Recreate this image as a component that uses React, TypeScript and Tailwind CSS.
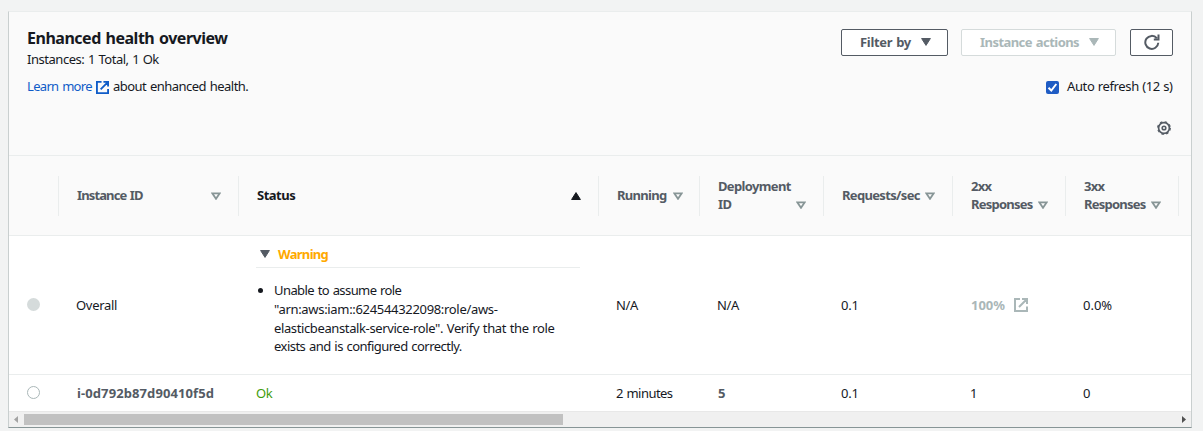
import React from "react";

const GRID = "grid grid-cols-[50px_180px_360px_101px_124px_129px_113px_113px_12px]";

function ExternalIcon({ className }: { className: string }) {
  return (
    <svg viewBox="0 0 14 14" className={className} fill="none" stroke="currentColor" strokeWidth="2">
      <path d="M6 1H1v12h12V8.5M8 1h5v5M13 1 5 9" />
    </svg>
  );
}

function Caret({ className }: { className: string }) {
  return (
    <svg viewBox="0 0 10 8" className={className} fill="currentColor">
      <path d="M.6.5h8.8L5 7.4z" stroke="currentColor" strokeWidth="1" strokeLinejoin="round" />
    </svg>
  );
}

function SortIcon() {
  return (
    <svg viewBox="0 0 10 8" className="h-2 w-2.5 shrink-0 text-[#879596]" fill="none" stroke="currentColor" strokeWidth="1.8">
      <path d="M1.4 1.4h7.2L5 6.8z" />
    </svg>
  );
}

function HeaderCell({ children, className = "" }: { children?: React.ReactNode; className?: string }) {
  return (
    <div className={`flex h-10 items-center border-r border-[#eaeded] pl-[18px] text-[13px] leading-[18px] font-bold ${className}`}>
      {children}
    </div>
  );
}

export default function App() {
  return (
    <div className="h-[431px] w-[1203px] overflow-hidden bg-[#f2f3f3] pt-[11px] pl-2 font-['Noto_Sans',sans-serif] text-[13px] leading-[18px] text-[#16191f]">
      <div className="flex h-[417px] w-[1184px] flex-col border border-t-[#eaeded] border-r-[#c9cfcf] border-b-[#879596] border-l-[#c9cfcf] bg-white">
        <header className="flex h-[144px] shrink-0 justify-between border-b border-[#eaeded] bg-[#fafafa] pr-[18px] pl-[18px]">
          <div className="pt-[15px]">
            <h1 className="text-[16px] leading-[22px] font-bold tracking-[-0.48px] [word-spacing:1px] whitespace-nowrap">Enhanced health overview</h1>
            <p className="mt-px tracking-[-0.46px] [word-spacing:0.6px] whitespace-nowrap">Instances: 1 Total, 1 Ok</p>
            <p className="mt-[9px] flex items-center whitespace-nowrap">
              <a className="w-[65px] tracking-[-0.68px] [word-spacing:1px] text-[#0f5cc8]">Learn more</a>
              <ExternalIcon className="mx-1 mt-0.5 size-[13px] text-[#0f5cc8]" />
              <span className="tracking-[-0.54px] [word-spacing:1px]">about enhanced health.</span>
            </p>
          </div>
          <div className="flex flex-col items-end pt-[17px]">
            <div className="flex items-center font-bold text-[#545b64]">
              <button className="flex h-[27px] w-[107px] items-center justify-between rounded-xs border border-[#545b64] bg-white pr-4 pb-px pl-[18px]">
                <span className="tracking-[-0.3px] [word-spacing:0.8px] whitespace-nowrap">Filter by</span>
                <Caret className="h-2 w-2.5" />
              </button>
              <button className="ml-[13px] flex h-[27px] w-[155px] items-center justify-between rounded-xs border border-[#d5dbdb] bg-white pr-4 pb-px pl-[18px] text-[#aab7b8]">
                <span className="tracking-[-0.55px] [word-spacing:1px] whitespace-nowrap">Instance actions</span>
                <Caret className="h-2 w-2.5" />
              </button>
              <button className="ml-[14px] flex h-[27px] w-[43px] items-center justify-center rounded-xs border border-[#545b64] bg-white">
                <svg viewBox="0 0 16 16" className="-mt-0.5 size-4" fill="none" stroke="currentColor" strokeWidth="2">
                  <path d="M14.3 8.8A6.5 6.5 0 1 1 12.8 4.2M14.5.6v4.8H9.8" />
                </svg>
              </button>
            </div>
            <label className="mt-[22px] flex items-center">
              <span className="mt-px mr-2 flex size-[13px] items-center justify-center rounded-xs bg-[#1f5cc4]">
                <svg viewBox="0 0 13 13" className="size-[13px]" fill="none" stroke="#fff" strokeWidth="2">
                  <path d="m2.5 6.8 2.8 2.7L10.3 3" />
                </svg>
              </span>
              <span className="-mt-px w-[106px] tracking-[-0.36px] [word-spacing:0.3px] whitespace-nowrap">Auto refresh (12 s)</span>
            </label>
            <svg viewBox="0 0 14 14" className="mt-[26px] mr-0.5 size-3.5 text-[#545b64]" fill="none" stroke="currentColor">
              <circle cx="7" cy="7" r="5.4" strokeWidth="1.7" />
              <circle cx="7" cy="7" r="6.3" strokeWidth="1.2" strokeDasharray="2.5 2.448" />
              <circle cx="7" cy="7" r="1.8" strokeWidth="1.6" />
            </svg>
          </div>
        </header>
        <div className={`${GRID} h-20 shrink-0 items-center border-b border-[#eaeded] bg-[#fafafa]`}>
          <HeaderCell />
          <HeaderCell className="justify-between pr-[17px] tracking-[-0.88px] text-[#545b64] [word-spacing:1px]"><span className="-mt-px">Instance ID</span><SortIcon /></HeaderCell>
          <HeaderCell className="justify-between pr-[17px] tracking-[-0.5px] text-[#16191f]">
            <span className="-mt-px">Status</span>
            <Caret className="h-2 w-2.5 rotate-180" />
          </HeaderCell>
          <HeaderCell className="justify-between pr-4 tracking-[-0.7px] text-[#545b64]"><span className="-mt-px">Running</span><SortIcon /></HeaderCell>
          <HeaderCell className="justify-between pr-[17px] tracking-[-0.65px] text-[#545b64]">
            <span className="-mt-0.5">Deployment<br />ID</span><span className="-ml-4 pt-[18px]"><SortIcon /></span>
          </HeaderCell>
          <HeaderCell className="justify-between pr-[17px] tracking-[-0.67px] text-[#545b64]"><span className="-mt-px">Requests/sec</span><SortIcon /></HeaderCell>
          <HeaderCell className="justify-between pr-[17px] tracking-[-0.77px] text-[#545b64]">
            <span className="-mt-0.5">2xx<br />Responses</span><span className="pt-[18px]"><SortIcon /></span>
          </HeaderCell>
          <HeaderCell className="justify-between pr-[17px] tracking-[-0.77px] text-[#545b64]">
            <span className="-mt-0.5">3xx<br />Responses</span><span className="pt-[18px]"><SortIcon /></span>
          </HeaderCell>
        </div>
        <div className={`${GRID} h-[139px] shrink-0 items-center border-b border-[#eaeded]`}>
          <div className="-mt-0.5 pl-[18px]"><span className="block size-[13px] rounded-full bg-[#d5dbdb]" /></div>
          <div className="pl-[17px] tracking-[-0.3px]">Overall</div>
          <div className="h-full pt-[9px] pl-[17px]">
            <div className="flex h-[23px] w-[324px] items-start border-b border-[#eaeded] pl-1 font-bold text-[#ffa900]">
              <Caret className="mt-[5px] mr-2 h-2 w-2.5 text-[#545b64]" />
              <span className="tracking-[-0.68px]">Warning</span>
            </div>
            <ul className="mt-[13px] list-disc pl-[18px] leading-[18.8px] whitespace-nowrap">
              <li>
                <span className="tracking-[-0.58px] [word-spacing:0.8px]">Unable to assume role</span><br />
                <span className="tracking-[-0.32px]">"arn:aws:iam::624544322098:role/aws-</span><br />
                <span className="tracking-[-0.38px] [word-spacing:0.7px]">elasticbeanstalk-service-role". Verify that the role</span><br />
                <span className="tracking-[-0.53px] [word-spacing:0.8px]">exists and is configured correctly.</span>
              </li>
            </ul>
          </div>
          <div className="pl-[17px] tracking-[-0.3px]">N/A</div>
          <div className="pl-[17px] tracking-[-0.3px]">N/A</div>
          <div className="pl-[17px] tracking-[-0.2px]">0.1</div>
          <div className="flex items-center pl-[18px] font-bold text-[#aab7b8]">
            <span>100%</span>
            <ExternalIcon className="ml-[9px] size-[14px]" />
          </div>
          <div className="pl-[17px]">0.0%</div>
        </div>
        <div className={`${GRID} h-9 shrink-0 items-center`}>
          <div className="-mt-0.5 pl-[18px]"><span className="block size-[13px] rounded-full border border-[#aab7b8]" /></div>
          <div className="pl-[18px] font-bold tracking-[0.1px] text-[#545b64]">i-0d792b87d90410f5d</div>
          <div className="pl-[17px] tracking-[-0.4px] text-[#3f9c0a]">Ok</div>
          <div className="pl-[17px] tracking-[-0.55px] [word-spacing:0.8px] whitespace-nowrap">2 minutes</div>
          <div className="pl-[18px] font-bold text-[#545b64]">5</div>
          <div className="pl-[17px] tracking-[-0.2px]">0.1</div>
          <div className="pl-[17px]">1</div>
          <div className="pl-[17px]">0</div>
        </div>
        <div className="flex flex-1 items-center border-t border-[#e8e8e8] bg-[#f0f0f0]">
          <svg viewBox="0 0 15 15" className="size-[15px] text-[#a3a3a3]" fill="currentColor"><path d="M9 4v7L5 7.5z" /></svg>
          <div className="h-[11px] w-[539px] bg-[#c1c1c1]" />
          <div className="flex-1" />
          <svg viewBox="0 0 15 15" className="size-[15px] text-[#505050]" fill="currentColor"><path d="M6 4v7l4-3.5z" /></svg>
        </div>
      </div>
    </div>
  );
}
